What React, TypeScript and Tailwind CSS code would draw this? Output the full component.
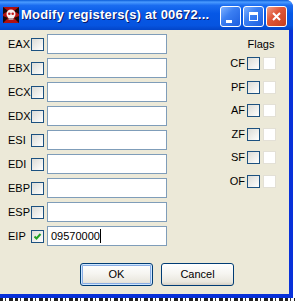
const regs = ['EAX', 'EBX', 'ECX', 'EDX', 'ESI', 'EDI', 'EBP', 'ESP', 'EIP']
const flags = ['CF', 'PF', 'AF', 'ZF', 'SF', 'OF']

function Check({ checked }: { checked?: boolean }) {
  return (
    <span className="flex h-[13px] w-[13px] shrink-0 items-center justify-center border border-[#1c5180] bg-[linear-gradient(135deg,#dcdcd7_0%,#efefec_55%,#ffffff_100%)]">
      {checked && (
        <svg width="9" height="9" viewBox="0 0 9 9">
          <path d="M1.5 4.5 L3.5 6.5 L7.5 2" stroke="#21a121" strokeWidth="2" fill="none" />
        </svg>
      )}
    </span>
  )
}

function OllyIcon() {
  return (
    <svg width="16" height="16" viewBox="0 0 16 16" className="shrink-0">
      <rect x="0" y="0" width="16" height="16" fill="#b01010" />
      <path d="M0 0 L5 4 L0 7 Z M16 0 L11 4 L16 7 Z M0 16 L5 11 L0 9 Z M16 16 L11 11 L16 9 Z" fill="#1a0a0a" />
      <circle cx="8" cy="7" r="4.5" fill="#f4f0f0" />
      <rect x="5.5" y="10" width="5" height="3" fill="#f4f0f0" />
      <circle cx="6.3" cy="6.8" r="1.3" fill="#c01818" />
      <circle cx="9.7" cy="6.8" r="1.3" fill="#c01818" />
      <path d="M6 13 L6 11 M8 13 L8 11 M10 13 L10 11" stroke="#601010" strokeWidth="0.8" />
    </svg>
  )
}

function TitleButton({ kind }: { kind: 'min' | 'max' | 'close' }) {
  const close = kind === 'close'
  return (
    <span
      className={
        close
          ? 'flex h-[21px] w-[21px] items-center justify-center rounded-[3px] border border-white bg-[linear-gradient(135deg,#f0a08a_0%,#e0583a_40%,#c73e1e_100%)]'
          : 'flex h-[21px] w-[21px] items-center justify-center rounded-[3px] border border-white bg-[linear-gradient(135deg,#7fb2ff_0%,#3b7ff2_40%,#1c5ee0_100%)]'
      }
    >
      {kind === 'min' && <span className="mr-[4px] mt-[9px] h-[3px] w-[6px] bg-white" />}
      {kind === 'max' && <span className="h-[9px] w-[9px] border border-t-[3px] border-white" />}
      {close && (
        <svg width="9" height="9" viewBox="0 0 9 9">
          <path d="M1 1 L8 8 M8 1 L1 8" stroke="white" strokeWidth="2" />
        </svg>
      )}
    </span>
  )
}

export default function App() {
  return (
    <div className="h-[301px] w-[295px] overflow-hidden bg-white font-['Liberation_Sans',Arial,sans-serif] text-[11px] leading-[13px] text-black">
      <div className="flex h-[298px] w-[293px] flex-col rounded-tr-[7px] bg-[#0831d9]">
        <div className="flex h-[30px] shrink-0 items-center rounded-tr-[7px] bg-[linear-gradient(180deg,#0a5cd8_0%,#4a9bff_7%,#1a6cf0_18%,#0658e6_45%,#0654e0_85%,#0345c8_100%)] pl-[3px] pr-[6px]">
          <OllyIcon />
          <span className="ml-[2px] whitespace-nowrap text-[13px] font-bold leading-[16px] tracking-[0.2px] text-white [text-shadow:1px_1px_0_#0a1a6a]">
            Modify registers(s) at 00672...
          </span>
          <div className="ml-auto flex gap-[2px] self-start pt-[6px]">
            <TitleButton kind="min" />
            <TitleButton kind="max" />
            <TitleButton kind="close" />
          </div>
        </div>

        <div className="mb-[4px] mr-[4px] flex flex-1 flex-col bg-[#ece9d8]">
          <div className="flex">
            <div className="flex flex-col gap-[4px] pl-[8px] pt-[4px]">
              {regs.map((r) => (
                <div key={r} className="flex h-[20px] items-center">
                  <span className="w-[23px]">{r}</span>
                  <Check checked={r === 'EIP'} />
                  <div className="ml-[3px] flex h-[20px] w-[120px] items-center border border-[#7f9db9] bg-white pl-[3px]">
                    {r === 'EIP' && (
                      <>
                        <span>09570000</span>
                        <span className="h-[14px] w-px bg-black" />
                      </>
                    )}
                  </div>
                </div>
              ))}
            </div>

            <div className="ml-auto flex flex-col items-end pr-[13px] pt-[8px]">
              <div className="flex w-[30px] justify-center whitespace-nowrap">Flags</div>
              <div className="mt-[6px] flex flex-col gap-[10.6px]">
                {flags.map((f) => (
                  <div key={f} className="flex h-[13px] items-center justify-end">
                    <span className="mr-[2px]">{f}</span>
                    <Check />
                    <span className="ml-[3px] h-[13px] w-[13px] border border-[#e3e0d6] bg-white" />
                  </div>
                ))}
              </div>
            </div>
          </div>

          <div className="mt-[17px] flex gap-[8px] pl-[80px]">
            <button className="h-[23px] w-[73px] rounded-[3px] border border-[#003c74] bg-[linear-gradient(180deg,#ffffff_0%,#f6f5f1_45%,#e9e7de_85%,#d6d0c5_100%)] text-[11px] shadow-[inset_0_0_0_1px_#cee7ff,inset_0_0_0_2px_#89ade4]">
              OK
            </button>
            <button className="h-[23px] w-[73px] rounded-[3px] border border-[#003c74] bg-[linear-gradient(180deg,#ffffff_0%,#f6f5f1_45%,#e9e7de_85%,#d6d0c5_100%)] text-[11px]">
              Cancel
            </button>
          </div>
        </div>
      </div>
      <div className="h-[3px] w-[295px] bg-[repeating-linear-gradient(90deg,#222_0_3px,#fff_3px_5px,#333_5px_6px,#fff_6px_9px,#222_9px_13px,#fff_13px_15px)]" />
    </div>
  )
}
